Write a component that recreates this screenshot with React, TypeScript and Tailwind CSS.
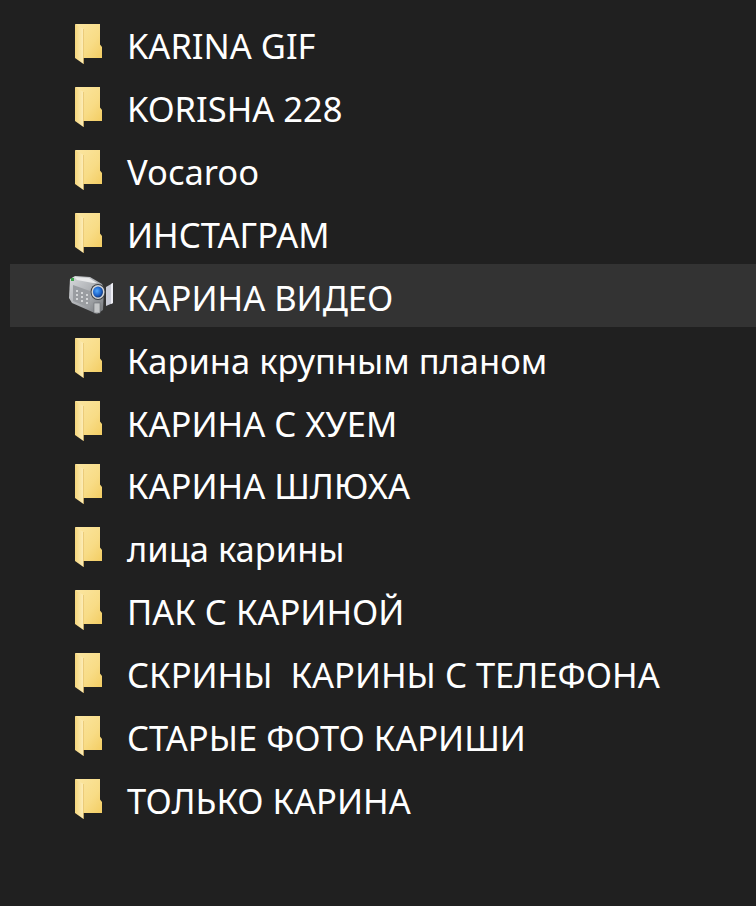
import React from 'react';

const items = [
  'KARINA GIF',
  'KORISHA 228',
  'Vocaroo',
  'ИНСТАГРАМ',
  'КАРИНА ВИДЕО',
  'Карина крупным планом',
  'КАРИНА С ХУЕМ',
  'КАРИНА ШЛЮХА',
  'лица карины',
  'ПАК С КАРИНОЙ',
  'СКРИНЫ  КАРИНЫ С ТЕЛЕФОНА',
  'СТАРЫЕ ФОТО КАРИШИ',
  'ТОЛЬКО КАРИНА',
];

const FolderIcon = () => (
  <svg width="30" height="42" viewBox="0 0 30 42" className="block">
    <defs>
      <linearGradient id="folderBack" x1="0" y1="0" x2="1" y2="1">
        <stop offset="0" stopColor="#fbe6a2" />
        <stop offset="0.6" stopColor="#f8dc86" />
        <stop offset="1" stopColor="#f3cd63" />
      </linearGradient>
      <linearGradient id="folderFlap" x1="0" y1="0" x2="1" y2="0">
        <stop offset="0" stopColor="#f5d67c" />
        <stop offset="1" stopColor="#fdeebb" />
      </linearGradient>
    </defs>
    <path d="M1 1H26V21.5L28 24V35H9V10Z" fill="url(#folderBack)" />
    <path d="M1 1L9.5 6V41L1 35Z" fill="url(#folderFlap)" />
    <path d="M9.5 6V41" stroke="#e0b95c" strokeWidth="0.6" />
  </svg>
);

const CameraIcon = () => (
  <svg width="50" height="44" viewBox="0 0 50 44" className="block">
    <defs>
      <linearGradient id="camBody" x1="0" y1="0" x2="1" y2="1">
        <stop offset="0" stopColor="#d8dadd" />
        <stop offset="0.6" stopColor="#a4a7ab" />
        <stop offset="1" stopColor="#6f7276" />
      </linearGradient>
      <radialGradient id="camLens" cx="0.4" cy="0.4" r="0.6">
        <stop offset="0" stopColor="#4fa8ff" />
        <stop offset="0.7" stopColor="#1c5fc4" />
        <stop offset="1" stopColor="#123a80" />
      </radialGradient>
    </defs>
    <path d="M40 14L47 10V30L40 33Z" fill="#c9cbd6" />
    <path d="M45 11L47 10V30L45 31Z" fill="#eeeef4" />
    <path d="M4 6L9 3L24 4L36 11L38 16L37 37L31 41L6 30L3 25Z" fill="url(#camBody)" />
    <path d="M8 4L23 5L31 10L27 10L11 7Z" fill="#e8e9ea" />
    <path d="M5 5H8V8H5Z" fill="#3fa34d" />
    <path d="M7 12L24 18V35L7 28Z" fill="#9a9da1" />
    <g fill="#d4d6d8">
      <rect x="10" y="17" width="2" height="2" />
      <rect x="15" y="19" width="2" height="2" />
      <rect x="20" y="21" width="2" height="2" />
      <rect x="10" y="21" width="2" height="2" />
      <rect x="15" y="23" width="2" height="2" />
      <rect x="20" y="25" width="2" height="2" />
      <rect x="10" y="25" width="2" height="2" />
      <rect x="15" y="27" width="2" height="2" />
      <rect x="20" y="29" width="2" height="2" />
    </g>
    <ellipse cx="32" cy="19" rx="7.5" ry="8" fill="#3e4145" />
    <ellipse cx="32" cy="19" rx="6.5" ry="7" fill="#d3d5d7" />
    <ellipse cx="32" cy="19" rx="5" ry="5.5" fill="url(#camLens)" />
    <rect x="28" y="30" width="6" height="10" fill="#c4c6c8" stroke="#6c6f73" strokeWidth="0.6" />
  </svg>
);

export default function App() {
  return (
    <div className="h-[906px] w-[756px] overflow-hidden bg-[#202020] pl-[10px] pt-[12.5px] font-['Noto_Sans','Open_Sans',sans-serif] text-[34.5px] text-white">
      {items.map((name, i) => (
        <div
          key={name}
          className={`flex h-[62.9px] items-center ${i === 4 ? 'bg-[#333333]' : ''}`}
        >
          <div className={`w-[117px] shrink-0 ${i === 4 ? 'pl-[56px]' : 'pl-[64px]'}`}>
            {i === 4 ? (
              <div className="mb-[2px]">
                <CameraIcon />
              </div>
            ) : (
              <FolderIcon />
            )}
          </div>
          <span className="whitespace-pre pt-[5px] leading-none">{name}</span>
        </div>
      ))}
    </div>
  );
}
